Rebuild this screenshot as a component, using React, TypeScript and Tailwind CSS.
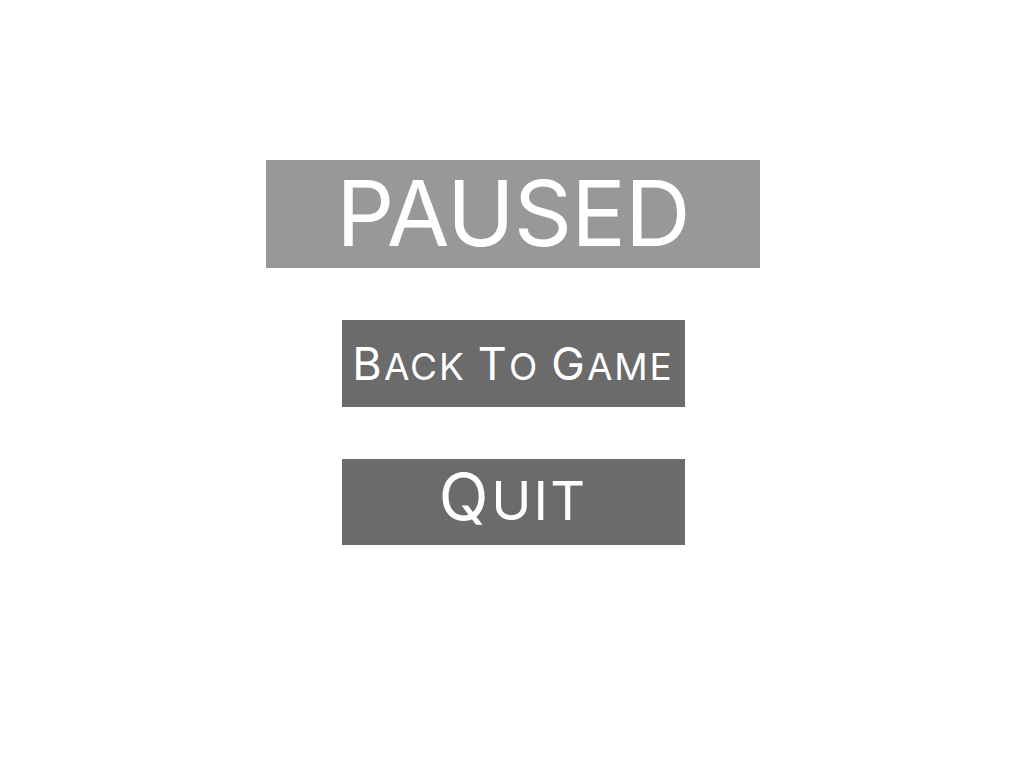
import React from 'react';

const SmallCaps: React.FC<{ text: string; big: string; small: string }> = ({ text, big, small }) => {
  const words = text.split(' ');
  return (
    <span className="inline-flex items-baseline gap-[12px]">
      {words.map((w, i) => (
        <span key={i} className="inline-flex items-baseline">
          <span className={big}>{w.charAt(0)}</span>
          <span className={small}>{w.slice(1).toUpperCase()}</span>
        </span>
      ))}
    </span>
  );
};

export default function App() {
  return (
    <div className="min-h-screen bg-white flex flex-col items-center pt-[160px] pl-[2px] gap-[52px] text-white font-['Inter','Liberation_Sans',sans-serif]">
      <div className="w-[494px] h-[108px] bg-[#989898] flex items-center justify-center">
        <span className="text-[91px] font-normal leading-none tracking-[-0.01em] pb-[1px]">PAUSED</span>
      </div>
      <button className="w-[343px] h-[87px] bg-[#6b6b6b] flex items-center justify-center leading-none">
        <SmallCaps
          text="Back To Game"
          big="text-[45px] font-normal tracking-[0.05em]"
          small="text-[37px] font-normal tracking-[0.05em]"
        />
      </button>
      <button className="w-[343px] h-[86px] bg-[#6b6b6b] flex items-center justify-center leading-none pb-[12px]">
        <SmallCaps
          text="Quit"
          big="text-[65px] font-normal tracking-[0.04em]"
          small="text-[54px] font-normal tracking-[0.04em]"
        />
      </button>
    </div>
  );
}
